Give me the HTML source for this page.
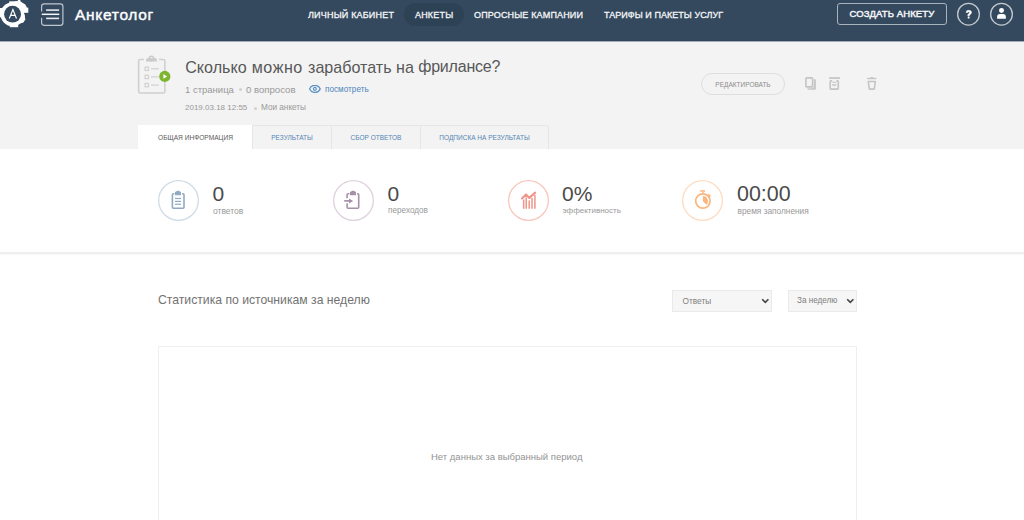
<!DOCTYPE html>
<html><head><meta charset="utf-8">
<style>
*{margin:0;padding:0;box-sizing:border-box}
html,body{width:1024px;height:520px;overflow:hidden;background:#fff;font-family:"Liberation Sans",sans-serif}
.abs{position:absolute;white-space:nowrap}
#hdr{position:absolute;left:0;top:0;width:1024px;height:41px;background:#34495e;border-bottom:1px solid #30445b}
.nav{position:absolute;top:9px;font-size:9px;color:#f4f5f7;-webkit-text-stroke:0.3px #f4f5f7;line-height:12px}
#band{position:absolute;left:0;top:41px;width:1024px;height:108px;background:#f3f3f3}
.tab{position:absolute;top:125px;height:24px;border-top:1px solid #e6e6e6;border-left:1px solid #e6e6e6;background:#f3f3f3;font-size:6.5px;color:#5584b3;line-height:24px;text-align:center}
#stats{position:absolute;left:0;top:149px;width:1024px;height:103px;background:#fff}
.circ{position:absolute;top:180px;width:41px;height:41px;border-radius:50%;border:1px solid}
.num{position:absolute;top:183px;font-size:21px;color:#4a4a4a;line-height:22px}
.lbl{position:absolute;top:205px;font-size:8.5px;color:#999;line-height:12px}
.sel{position:absolute;top:290px;height:22px;background:#f6f6f6;border:1px solid #eaeaea;font-size:8.3px;color:#808080;line-height:20px}
.sub{position:absolute;color:#999;line-height:12px}
.dot{position:absolute;width:3px;height:3px;border-radius:50%;background:#d0d0d0}
</style></head><body>
<div id="hdr"></div>
<!-- logo -->
<svg class="abs" style="left:0;top:0" width="30" height="30" viewBox="0 0 30 30">
  <circle cx="12.55" cy="14.15" r="12" fill="#fff"/>
  <rect x="9.2" y="1.3" width="9.3" height="3" fill="#fff"/>
  <rect x="17.8" y="0" width="2.6" height="3" fill="#fff"/>
  <rect x="23.5" y="7.6" width="4.8" height="5.2" fill="#fff"/>
  <rect x="9.8" y="23.5" width="8.4" height="3.7" fill="#fff"/>
  <rect x="0" y="8" width="3" height="9.3" fill="#fff"/>
  <path d="M15 1.3 L20.6 1.5 L25.2 4.6 L27 7.6 L20 12 L14 8 Z" fill="#fff"/>
  <path d="M24.6 14.6 L25.3 19.6 L23.4 22.6 L20 23.6 L16 16 Z" fill="#fff"/>
  <path d="M24.2 13 L26.2 13 L24.8 14.8 Z" fill="#34495e"/>
  <circle cx="12.55" cy="14.15" r="8.45" fill="#34495e"/>
  <path d="M9.3 18.5 L12.9 9.6 L16.5 18.5 M10.6 15.4 L15.2 15.4" fill="none" stroke="#fff" stroke-width="1.15"/>
</svg>
<!-- menu icon -->
<svg class="abs" style="left:41px;top:2.5px" width="24" height="24" viewBox="0 0 24 24">
  <rect x="0.6" y="0.9" width="21.3" height="21.5" rx="2.6" fill="none" stroke="#bdc6cf" stroke-width="1.2"/>
  <rect x="-0.5" y="8.5" width="2.5" height="6.3" fill="#34495e"/>
  <line x1="5.1" y1="7.1" x2="18.1" y2="7.1" stroke="#e4e8ec" stroke-width="1.6"/>
  <line x1="0.75" y1="11.3" x2="18.3" y2="11.3" stroke="#f4f6f8" stroke-width="1.5"/>
  <line x1="5.1" y1="15.4" x2="18.1" y2="15.4" stroke="#e4e8ec" stroke-width="1.6"/>
</svg>
<div class="abs" style="left:75px;top:5.5px;font-size:15.5px;letter-spacing:0.7px;-webkit-text-stroke:0.4px #fff;color:#fff;line-height:18px">Анкетолог</div>

<div class="abs" style="left:404px;top:3px;width:60px;height:23px;border-radius:12px;background:#2e4256"></div>
<div class="nav abs" style="left:308px;letter-spacing:0.19px">ЛИЧНЫЙ КАБИНЕТ</div>
<div class="nav abs" style="left:415px;letter-spacing:0.18px">АНКЕТЫ</div>
<div class="nav abs" style="left:474px;letter-spacing:0.16px">ОПРОСНЫЕ КАМПАНИИ</div>
<div class="nav abs" style="left:604px;letter-spacing:0.05px">ТАРИФЫ И ПАКЕТЫ УСЛУГ</div>

<div class="abs" style="left:837px;top:3px;width:110px;height:22px;border:1px solid #aab4bf;border-radius:3px"></div>
<div class="nav abs" style="left:849.5px;font-size:9.5px;letter-spacing:0.1px;top:8px;-webkit-text-stroke:0.45px #f4f5f7">СОЗДАТЬ АНКЕТУ</div>
<svg class="abs" style="left:954px;top:0px" width="64" height="30" viewBox="954 0 64 30">
  <circle cx="968.5" cy="14.2" r="10.85" fill="none" stroke="#c3c9d0" stroke-width="1.3"/>
  <circle cx="1001.5" cy="14.2" r="10.85" fill="none" stroke="#c3c9d0" stroke-width="1.3"/>
  <path d="M966.1 12.4 Q966.1 10.3 968.7 10.3 Q971.5 10.3 971.5 12.5 Q971.5 13.8 970.1 14.5 Q969.4 14.9 969.4 15.8 L967.8 15.8 Q967.6 14.3 968.8 13.6 Q969.7 13.1 969.7 12.5 Q969.7 11.8 968.7 11.8 Q967.8 11.8 967.8 12.6 Z" fill="#fff" stroke="#fff" stroke-width="0.5"/>
  <rect x="967.7" y="16.6" width="1.9" height="1.8" rx="0.4" fill="#fff"/>
  <ellipse cx="1001.5" cy="10.45" rx="2.5" ry="2.45" fill="#fff"/>
  <path d="M997.1 18.4 L997.1 17 Q997.1 14 1000 14 L1003 14 Q1005.9 14 1005.9 17 L1005.9 18.4 Q1005.9 18.8 1005.5 18.8 L997.5 18.8 Q997.1 18.8 997.1 18.4 Z" fill="#fff"/>
</svg>

<div id="band"></div>
<div class="abs" style="left:0;top:41px;width:1024px;height:1px;background:#a3acb5"></div>
<!-- survey icon -->
<svg class="abs" style="left:134px;top:53px" width="40" height="44" viewBox="0 0 40 44">
  <rect x="4.65" y="6.5" width="26.2" height="33.5" rx="1.5" fill="none" stroke="#d0d0d0" stroke-width="1.6"/>
  <rect x="10" y="4" width="15" height="4" fill="#f3f3f3"/>
  <path d="M12 8.5 L12.6 5.2 L22.4 5.2 L23 8.5 Z" fill="#cacaca"/>
  <circle cx="17.5" cy="5.5" r="2.2" fill="none" stroke="#cacaca" stroke-width="1.5"/>
  <rect x="11.1" y="14.1" width="3.4" height="3.4" fill="none" stroke="#d0d0d0" stroke-width="1.2"/>
  <rect x="11.1" y="22.2" width="3.4" height="3.4" fill="none" stroke="#d0d0d0" stroke-width="1.2"/>
  <rect x="11.1" y="30.4" width="3.4" height="3.4" fill="none" stroke="#d0d0d0" stroke-width="1.2"/>
  <line x1="17" y1="15.8" x2="24.8" y2="15.8" stroke="#d0d0d0" stroke-width="1.2"/>
  <line x1="17" y1="23.9" x2="24.8" y2="23.9" stroke="#d0d0d0" stroke-width="1.2"/>
  <line x1="17" y1="32.1" x2="24.8" y2="32.1" stroke="#d0d0d0" stroke-width="1.2"/>
  <circle cx="30.8" cy="23.4" r="5.6" fill="#7db52f"/>
  <path d="M29.4 21.1 L33.1 23.4 L29.4 25.7 Z" fill="#fff"/>
</svg>
<div class="abs" style="left:185.2px;top:58px;font-size:16.1px;color:#585858;line-height:18px">Сколько</div>
<div class="abs" style="left:251.8px;top:58px;font-size:16.1px;letter-spacing:0.5px;color:#585858;line-height:18px">можно</div>
<div class="abs" style="left:308px;top:58px;font-size:16.1px;color:#585858;line-height:18px">заработать</div>
<div class="abs" style="left:396px;top:58px;font-size:16.1px;color:#585858;line-height:18px">на</div>
<div class="abs" style="left:418.2px;top:58px;font-size:16px;color:#585858;line-height:18px;letter-spacing:-0.2px">фрилансе?</div>
<div class="sub abs" style="left:185px;top:84px;font-size:9.5px">1 страница</div>
<div class="dot" style="left:239px;top:88px"></div>
<div class="sub abs" style="left:246px;top:84px;font-size:9.6px">0 вопросов</div>
<svg class="abs" style="left:309px;top:85px" width="12" height="8" viewBox="0 0 12 8">
  <path d="M0.5 3.85 C2.8 -0.9, 8.9 -0.9, 11.2 3.85 C8.9 8.6, 2.8 8.6, 0.5 3.85 Z" fill="none" stroke="#5b92c4" stroke-width="1.3"/>
  <circle cx="5.85" cy="3.85" r="1.45" fill="none" stroke="#5b92c4" stroke-width="1.2"/>
</svg>
<div class="sub abs" style="left:325px;top:84px;font-size:8.2px;color:#4f86bb">посмотреть</div>
<div class="sub abs" style="left:185px;top:102px;font-size:8px">2019.03.18 12:55</div>
<div class="dot" style="left:253.5px;top:106.5px"></div>
<div class="sub abs" style="left:261px;top:102px;font-size:8.2px">Мои анкеты</div>

<!-- edit pill -->
<div class="abs" style="left:701px;top:73px;width:84px;height:22px;border:1px solid #dedede;border-radius:11px;font-size:6.5px;color:#8c8c8c;line-height:22px;text-align:center">РЕДАКТИРОВАТЬ</div>
<svg class="abs" style="left:800px;top:72px" width="90" height="22" viewBox="800 72 90 22">
  <rect x="807.4" y="79.2" width="8.5" height="10.6" rx="0.8" fill="#c8c8c8"/>
  <rect x="805.9" y="77.9" width="6.7" height="9" rx="0.8" fill="#f3f3f3" stroke="#f3f3f3" stroke-width="2.6"/>
  <rect x="805.9" y="77.9" width="6.7" height="9" rx="0.8" fill="#f3f3f3" stroke="#c4c4c4" stroke-width="1.6"/>
  <rect x="829.1" y="77.2" width="10.8" height="1.7" fill="#c4c4c4"/>
  <path d="M832.2 80.9 L831 80.9 Q830.2 80.9 830.2 81.7 L830.2 88.3 Q830.2 89.1 831 89.1 L837.5 89.1 Q838.3 89.1 838.3 88.3 L838.3 81.7 Q838.3 80.9 837.5 80.9 L836.4 80.9" fill="none" stroke="#c4c4c4" stroke-width="1.6"/>
  <line x1="832.4" y1="82.3" x2="836.2" y2="82.3" stroke="#c4c4c4" stroke-width="1.1"/>
  <rect x="832.2" y="84.2" width="4.1" height="1.5" fill="#c4c4c4"/>
  <rect x="867.1" y="77.9" width="9.3" height="1.3" fill="#c4c4c4"/>
  <rect x="870" y="77" width="3.6" height="1.2" rx="0.5" fill="#cccccc"/>
  <path d="M868.3 81.5 L875.3 81.5 L874.4 88.5 Q874.3 89.1 873.7 89.1 L869.9 89.1 Q869.3 89.1 869.2 88.5 Z" fill="none" stroke="#c4c4c4" stroke-width="1.6" stroke-linejoin="round"/>
</svg>

<!-- tabs -->
<div class="abs" style="left:138px;top:125px;width:114px;height:24px;background:#fff;font-size:6.6px;color:#5a5a5a;line-height:25px;text-align:center;padding-left:1px">ОБЩАЯ ИНФОРМАЦИЯ</div>
<div class="tab abs" style="left:252px;width:79px">РЕЗУЛЬТАТЫ</div>
<div class="tab abs" style="left:331px;width:89px">СБОР ОТВЕТОВ</div>
<div class="tab abs" style="left:420px;width:129px;border-right:1px solid #e6e6e6;border-top-right-radius:3px">ПОДПИСКА НА РЕЗУЛЬТАТЫ</div>
<div id="stats"></div>
<div class="abs" style="left:0;top:252px;width:1024px;height:2px;background:#efefef"></div>
<div class="abs" style="left:0;top:254px;width:1024px;height:1px;background:#f8f8f8"></div>

<!-- stats -->
<svg class="abs" style="left:158px;top:180px" width="41" height="41" viewBox="0 0 41 41"><circle cx="20.5" cy="20.5" r="19.85" fill="none" stroke="#d0dbe5" stroke-width="1.3"/></svg>
<svg class="abs" style="left:158px;top:180px" width="41" height="41" viewBox="0 0 41 41">
  <g stroke="#91aac2" fill="none">
    <path d="M16.4 13.8 L15.4 13.8 Q14.4 13.8 14.4 14.8 L14.4 27.2 Q14.4 28.2 15.4 28.2 L25 28.2 Q26 28.2 26 27.2 L26 14.8 Q26 13.8 25 13.8 L24 13.8" stroke-width="1.6"/>
    <line x1="17" y1="18.5" x2="23" y2="18.5" stroke-width="1.2"/>
    <line x1="17" y1="21.4" x2="23" y2="21.4" stroke-width="1.2"/>
    <line x1="17" y1="24.25" x2="23" y2="24.25" stroke-width="1.2"/>
  </g>
  <path d="M17 15.25 L17 12 L20 10.4 L23 12 L23 15.25 Z" fill="#91aac2"/>
</svg>
<div class="num abs" style="left:212.5px">0</div>
<div class="lbl abs" style="left:213px">ответов</div>

<svg class="abs" style="left:333px;top:180px" width="41" height="41" viewBox="0 0 41 41"><circle cx="20.5" cy="20.5" r="19.85" fill="none" stroke="#ddd2dd" stroke-width="1.3"/></svg>
<svg class="abs" style="left:333px;top:180px" width="41" height="41" viewBox="0 0 41 41">
  <g stroke="#a68fa9" fill="none">
    <path d="M14.1 18.2 L14.1 14.8 Q14.1 13.8 15.1 13.8 L16.4 13.8 M24 13.8 L24.7 13.8 Q25.7 13.8 25.7 14.8 L25.7 27.2 Q25.7 28.2 24.7 28.2 L15.1 28.2 Q14.1 28.2 14.1 27.2 L14.1 23.2" stroke-width="1.6"/>
    <line x1="11.2" y1="20.9" x2="17" y2="20.9" stroke-width="1.7"/>
  </g>
  <path d="M16 18.4 L20.2 20.9 L16 23.4 Z" fill="#a68fa9"/>
  <path d="M17 15.25 L17 12 L20 10.4 L23 12 L23 15.25 Z" fill="#a68fa9"/>
</svg>
<div class="num abs" style="left:387.5px">0</div>
<div class="lbl abs" style="left:388px;font-size:8.2px">переходов</div>

<svg class="abs" style="left:507.5px;top:180px" width="41" height="41" viewBox="0 0 41 41"><circle cx="20.5" cy="20.5" r="19.85" fill="none" stroke="#f8c6bd" stroke-width="1.3"/></svg>
<svg class="abs" style="left:507.5px;top:180px" width="41" height="41" viewBox="0 0 41 41">
  <g stroke="#ef9488" fill="none">
    <line x1="15.65" y1="19.5" x2="15.65" y2="28.8" stroke-width="1.5"/>
    <line x1="18.2" y1="17.5" x2="18.2" y2="28.8" stroke-width="1.5"/>
    <line x1="21.2" y1="20.5" x2="21.2" y2="28.8" stroke-width="1.5"/>
    <line x1="24" y1="18" x2="24" y2="28.8" stroke-width="1.5"/>
    <line x1="26.9" y1="15" x2="26.9" y2="28.8" stroke-width="1.5"/>
    <path d="M14 18.4 L18 14.4 L21.4 17.9 L27.2 12.6" stroke-width="2.1" stroke-linecap="round" stroke-linejoin="round"/>
  </g>
</svg>
<div class="num abs" style="left:562px">0%</div>
<div class="lbl abs" style="left:562.5px;font-size:8px">эффективность</div>

<svg class="abs" style="left:682px;top:180px" width="41" height="41" viewBox="0 0 41 41"><circle cx="20.5" cy="20.5" r="19.85" fill="none" stroke="#fddcc3" stroke-width="1.3"/></svg>
<svg class="abs" style="left:682px;top:180px" width="41" height="41" viewBox="0 0 41 41">
  <g stroke="#fab67e" fill="none">
    <circle cx="20.9" cy="21" r="7.2" stroke-width="1.7"/>
    <line x1="20.9" y1="11.5" x2="20.9" y2="13.8" stroke-width="1.3"/>
    <line x1="18.2" y1="11" x2="23" y2="11" stroke-width="1.5"/>
    <line x1="26.2" y1="14.4" x2="28.4" y2="16.6" stroke-width="1.6"/>
  </g>
  <path d="M20.9 21.3 L20.9 16 A5.1 5.1 0 0 1 24.4 24.7 Z" fill="#fab67e"/>
</svg>
<div class="num abs" style="left:737px;font-size:21.4px">00:00</div>
<div class="lbl abs" style="left:737.5px;font-size:8.3px">время заполнения</div>

<!-- chart area -->
<div class="abs" style="left:158px;top:293px;font-size:12.2px;color:#727272;line-height:14px">Статистика по источникам за неделю</div>
<div class="sel" style="left:672px;width:100px;padding-left:9.5px">Ответы</div>
<svg class="abs" style="left:761px;top:298px" width="9" height="6" viewBox="0 0 9 6"><path d="M1.2 1.2 L4.3 4.3 L7.4 1.2" fill="none" stroke="#444" stroke-width="1.6"/></svg>
<div class="sel" style="left:788px;width:69px;padding-left:8px;font-size:8.15px">За неделю</div>
<svg class="abs" style="left:846px;top:298px" width="9" height="6" viewBox="0 0 9 6"><path d="M1.2 1.2 L4.3 4.3 L7.4 1.2" fill="none" stroke="#444" stroke-width="1.6"/></svg>

<div class="abs" style="left:158px;top:346px;width:699px;height:200px;border:1px solid #efefef"></div>
<div class="abs" style="left:431px;top:451px;font-size:9.5px;color:#939393;line-height:12px">Нет данных за выбранный период</div>
</body></html>
